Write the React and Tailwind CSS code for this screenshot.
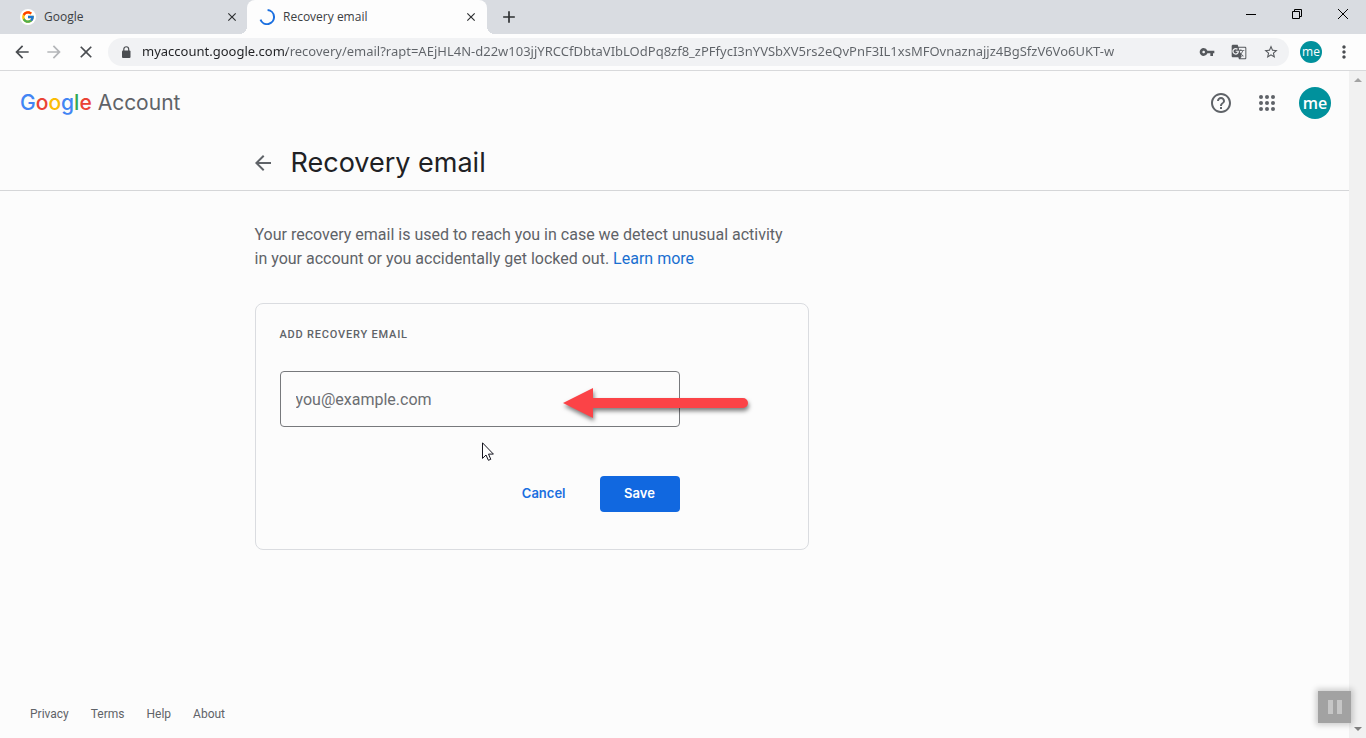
import { useState } from 'react';
import { FcGoogle } from 'react-icons/fc';
import {
  MdAdd,
  MdArrowBack,
  MdArrowForward,
  MdClose,
  MdGTranslate,
  MdHelpOutline,
  MdMoreVert,
  MdStarBorder,
  MdVpnKey,
} from 'react-icons/md';

const PAGE_URL =
  'myaccount.google.com/recovery/email?rapt=AEjHL4N-d22w103jjYRCCfDbtaVIbLOdPq8zf8_zPFfycI3nYVSbXV5rs2eQvPnF3IL1xsMFOvnaznajjz4BgSfzV6Vo6UKT-w';

const footerLinks = ['Privacy', 'Terms', 'Help', 'About'];

function Spinner() {
  return (
    <svg className="w-4 h-4" viewBox="0 0 16 16" fill="none">
      <path d="M8.6 1.1A7 7 0 1 1 1.5 10.6" stroke="#1a6fe0" strokeWidth="2" />
    </svg>
  );
}

function LockIcon() {
  return (
    <svg className="w-3 h-3 shrink-0" viewBox="0 0 12 12">
      <rect x="2" y="4.5" width="8.5" height="7.5" rx="1" fill="currentColor" />
      <path d="M3.8 5V3.2a2.4 2.4 0 0 1 4.9 0V5" fill="none" stroke="currentColor" strokeWidth="1.2" />
    </svg>
  );
}

function AppsIcon() {
  return (
    <svg className="w-6 h-6" viewBox="0 0 24 24" fill="currentColor">
      {[6, 12, 18].map((y) => [6, 12, 18].map((x) => <circle key={`${x}-${y}`} cx={x} cy={y} r="2" />))}
    </svg>
  );
}

function TabStrip() {
  return (
    <div className="flex h-[34px] bg-[#d9dce1] font-['Open_Sans',sans-serif] text-xs text-[#3c4043]">
      <div className="flex items-center w-[247px] pl-5 pr-[7px]">
        <span className="flex items-center justify-center w-4 h-4 rounded-full bg-white">
          <FcGoogle className="w-[14px] h-[14px]" />
        </span>
        <span className="ml-2 flex-1">Google</span>
        <button aria-label="Close tab" className="p-px">
          <MdClose className="w-[14px] h-[14px] text-[#2d2f31]" />
        </button>
      </div>
      <div className="relative flex items-center w-60 pl-3 pr-2 rounded-t-lg bg-[#fdfdfd]">
        <span className="absolute bottom-0 -left-2 w-2 h-2 bg-[radial-gradient(circle_at_0_0,transparent_8px,#fdfdfd_8px)]" />
        <span className="absolute bottom-0 -right-2 w-2 h-2 bg-[radial-gradient(circle_at_100%_0,transparent_8px,#fdfdfd_8px)]" />
        <Spinner />
        <span className="ml-2 flex-1">Recovery email</span>
        <button aria-label="Close tab" className="p-px">
          <MdClose className="w-[14px] h-[14px] text-[#2d2f31]" />
        </button>
      </div>
      <button aria-label="New tab" className="ml-3">
        <MdAdd className="w-5 h-5 text-[#2d2f31]" />
      </button>
      <div className="ml-auto flex items-center gap-9 pr-[18px] pb-[6px] text-black">
        <button aria-label="Minimize">
          <svg className="w-[10px] h-[10px]" viewBox="0 0 10 10" fill="none" stroke="currentColor">
            <path d="M0 5.5H10" />
          </svg>
        </button>
        <button aria-label="Restore">
          <svg className="w-[10px] h-[10px]" viewBox="0 0 10 10" fill="none" stroke="currentColor">
            <path d="M.5 2.5H7.5V9.5H.5Z M2.5 2.5V.5H9.5V7.5H7.5" />
          </svg>
        </button>
        <button aria-label="Close window">
          <svg className="w-[10px] h-[10px]" viewBox="0 0 10 10" fill="none" stroke="currentColor">
            <path d="M0 0L10 10M10 0L0 10" />
          </svg>
        </button>
      </div>
    </div>
  );
}

function Toolbar() {
  return (
    <div className="flex items-center h-[37px] px-3 border-b border-[#d8d9db] bg-[#fdfdfd] text-[#4a4d51]">
      <button aria-label="Back">
        <MdArrowBack className="w-5 h-5" />
      </button>
      <button aria-label="Forward" className="ml-3 text-[#b4b6b9]">
        <MdArrowForward className="w-5 h-5" />
      </button>
      <button aria-label="Stop" className="ml-3">
        <MdClose className="w-5 h-5" />
      </button>
      <div className="flex items-center flex-1 min-w-0 h-7 ml-3 pl-3 pr-[10px] rounded-full bg-[#f1f2f4]">
        <LockIcon />
        <input
          aria-label="Address"
          readOnly
          value={PAGE_URL}
          className="flex-1 min-w-0 ml-[10px] outline-none font-['Noto_Sans',sans-serif] text-[13px] text-transparent bg-clip-text bg-[linear-gradient(90deg,#202124_145px,#5f6368_145px)]"
        />
        <div className="flex items-center gap-4 ml-4 text-[#55585c]">
          <button aria-label="Passwords">
            <MdVpnKey className="w-4 h-4" />
          </button>
          <button aria-label="Translate">
            <MdGTranslate className="w-4 h-4" />
          </button>
          <button aria-label="Bookmark">
            <MdStarBorder className="w-4 h-4" />
          </button>
        </div>
      </div>
      <button className="ml-[11px] w-[22px] h-[22px] rounded-full bg-[#00919c] font-['Open_Sans',sans-serif] text-xs leading-5 text-white">
        me
      </button>
      <button aria-label="Menu" className="ml-3">
        <MdMoreVert className="w-5 h-5" />
      </button>
    </div>
  );
}

function Logo() {
  return (
    <a href="#" className="font-['Inter',sans-serif] text-[21px] leading-8 text-[#5f6368]">
      <span className="font-medium">
        <span className="text-[#4285f4]">G</span>
        <span className="text-[#ea4335]">o</span>
        <span className="text-[#fbbc04]">o</span>
        <span className="text-[#4285f4]">g</span>
        <span className="text-[#34a853]">l</span>
        <span className="text-[#ea4335]">e</span>
      </span>{' '}
      Account
    </a>
  );
}

function PointerArrow() {
  return (
    <svg
      className="absolute left-[307px] top-[83px] w-[190px] h-10 pointer-events-none drop-shadow-[1px_3px_2px_rgba(0,0,0,0.5)]"
      viewBox="0 0 190 40"
      fill="#fb4347"
    >
      <path d="M0 16L30 1V11H180A5 5 0 0 1 180 21H30V31Z" />
    </svg>
  );
}

function MouseCursor() {
  return (
    <svg className="absolute left-[226px] top-[138px] w-3 h-[19px] pointer-events-none" viewBox="0 0 12 19">
      <path
        d="M.5 .8V16.4L4 13L6.4 18.3L8.8 17.3L6.5 12.1H11.4Z"
        fill="#fff"
        stroke="#15151f"
      />
    </svg>
  );
}

function RecoveryForm() {
  const [email, setEmail] = useState('');

  return (
    <form
      onSubmit={(e) => e.preventDefault()}
      className="relative max-w-[554px] mt-8 px-6 pt-[21px] pb-[37px] border border-[#dadce0] rounded-lg"
    >
      <label
        htmlFor="email"
        className="block text-[11px] leading-5 font-medium tracking-[0.8px] uppercase text-[#5f6368]"
      >
        Add recovery email
      </label>
      <input
        id="email"
        type="email"
        value={email}
        onChange={(e) => setEmail(e.target.value)}
        placeholder="you@example.com"
        className="block w-full max-w-[400px] h-14 mt-[26px] px-[15px] border border-[#77797c] rounded outline-none text-base text-[#202124] placeholder:text-[#6b6e72]"
      />
      <div className="flex justify-end max-w-[400px] mt-[49px] font-['Inter',sans-serif] text-[13px] font-semibold">
        <button type="button" className="h-9 px-6 mr-[10px] text-[#1a6fe0]">
          Cancel
        </button>
        <button type="submit" className="w-20 h-9 rounded bg-[#1168e0] text-white">
          Save
        </button>
      </div>
      <PointerArrow />
      <MouseCursor />
    </form>
  );
}

function Scrollbar() {
  return (
    <div className="flex flex-col items-center justify-between w-[17px] shrink-0 py-[7px] bg-[#f1f1f1]">
      <svg className="w-2 h-1" viewBox="0 0 8 4" fill="#a3a3a3">
        <path d="M0 4L4 0L8 4Z" />
      </svg>
      <svg className="w-2 h-1" viewBox="0 0 8 4" fill="#7f7f7f">
        <path d="M0 0L4 4L8 0Z" />
      </svg>
    </div>
  );
}

export default function App() {
  return (
    <div className="flex flex-col min-h-screen bg-[#fcfcfc] font-['Roboto',sans-serif]">
      <TabStrip />
      <Toolbar />
      <div className="flex flex-1">
        <div className="flex flex-col flex-1 min-w-0">
          <header className="flex items-center h-16 pl-5 pr-[18px]">
            <Logo />
            <div className="ml-auto flex items-center text-[#5f6368]">
              <button aria-label="Help">
                <MdHelpOutline className="w-6 h-6" />
              </button>
              <button aria-label="Google apps" className="ml-[22px]">
                <AppsIcon />
              </button>
              <button className="ml-5 w-8 h-8 rounded-full bg-[#00919c] font-['Open_Sans',sans-serif] text-base leading-7 font-semibold text-white">
                me
              </button>
            </div>
          </header>

          <div className="h-14 px-6 border-b border-[#d5d6d8]">
            <div className="flex items-center h-full max-w-[840px] mx-auto">
              <button aria-label="Back" className="-ml-1">
                <MdArrowBack className="w-6 h-6 text-[#5f6368]" />
              </button>
              <h1 className="ml-4 font-['Inter',sans-serif] text-[27px] leading-9 text-[#202124]">
                Recovery email
              </h1>
            </div>
          </div>

          <main className="flex-1 px-6 pt-8">
            <div className="max-w-[840px] mx-auto">
              <p className="max-w-[540px] text-base text-[#5f6368]">
                Your recovery email is used to reach you in case we detect unusual activity in your
                account or you accidentally get locked out.{' '}
                <a href="#" className="text-[#1a6fd0]">
                  Learn more
                </a>
              </p>
              <RecoveryForm />
            </div>
          </main>

          <footer className="flex gap-[22px] px-[30px] pb-4 text-xs leading-4 text-[#5f6368]">
            {footerLinks.map((link) => (
              <a key={link} href="#">
                {link}
              </a>
            ))}
          </footer>
        </div>
        <Scrollbar />
      </div>

      <button
        aria-label="Pause"
        className="fixed right-[15px] bottom-[15px] flex items-center justify-center gap-1 w-[33px] h-8 bg-[#a2a2a2] shadow-[0_0_6px_2px_rgba(0,0,0,0.2)]"
      >
        <span className="w-[5px] h-[14px] bg-[#c6c6c6]" />
        <span className="w-[5px] h-[14px] bg-[#c6c6c6]" />
      </button>
    </div>
  );
}
